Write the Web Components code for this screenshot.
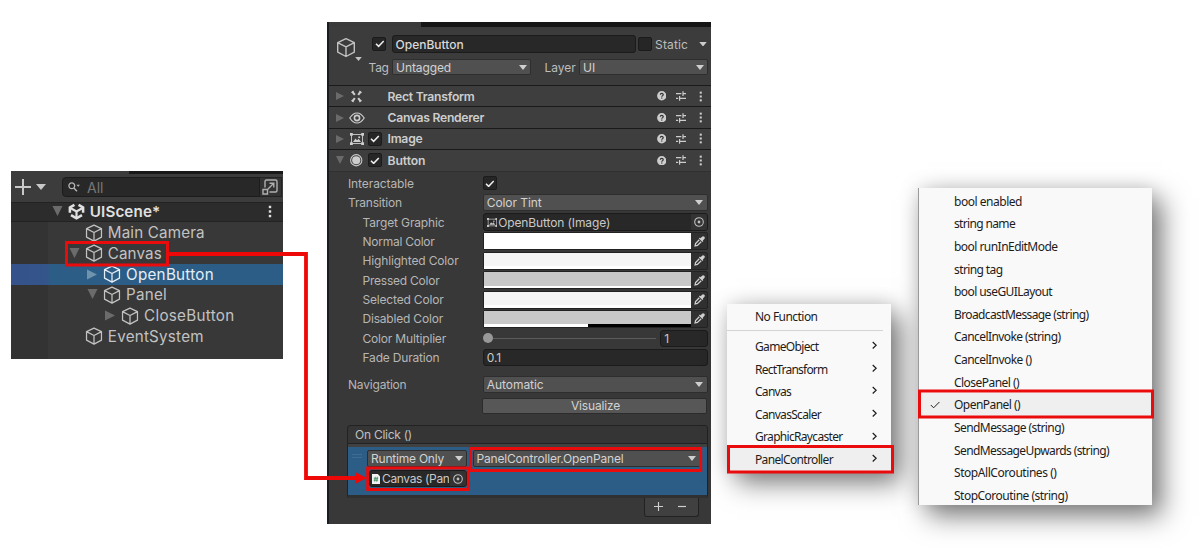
<!DOCTYPE html>
<html lang="en">
<head>
<meta charset="utf-8">
<title>Unity button event setup</title>
<style>
html,body{margin:0;height:549px;overflow:hidden;background:#fff}
</style>
</head>
<body>
<setup-page></setup-page>
<script>
const define=(name,css,html,setup)=>customElements.define(name,class extends HTMLElement{
  constructor(){super();const t=document.createElement('template');
    t.innerHTML='<style>*{box-sizing:border-box}'+css+'</style>'+html;
    this.attachShadow({mode:'open'}).append(t.content.cloneNode(true));}
  connectedCallback(){if(setup)setup(this,this.shadowRoot)}
});

/* Label whose tracking is tuned to a given advance width */
define('fit-text',':host{display:inline-block;white-space:nowrap;flex:none}span{display:inline-block;white-space:pre}','<span><slot></slot></span>',(h,r)=>{
  const s=r.querySelector('span'),w=+h.getAttribute('w'),n=h.textContent.length;
  if(!w||!n)return;
  s.style.letterSpacing=((w-s.getBoundingClientRect().width)/n).toFixed(3)+'px';
});

const ICONS={
 cube:['0 0 20 20','<g fill="none" stroke="currentColor" stroke-width="1.4" stroke-linejoin="round"><path d="M10 1.2 18.3 5.2V14.6L10 19 1.7 14.6V5.2ZM1.7 5.2 10 9.4 18.3 5.2M10 9.4V19"/></g>'],
 unity:['0 0 18 18','<g fill="none" stroke="currentColor"><path stroke-width="2.7" d="M6.8 1.9 2 4.7V10.4M11.2 1.9 16 4.7V10.4M3.2 12.9 9 16.3 14.8 12.9"/><path stroke-width="2.3" d="M3 5.6 9 9 15 5.6M9 9V15.5"/></g>'],
 down:['0 0 10 6','<path fill="currentColor" d="M0 0H10L5 6Z"/>'],
 open:['0 0 10 10','<path fill="currentColor" d="M0 0H10L5 10Z"/>'],
 shut:['0 0 10 10','<path fill="currentColor" d="M0 0 10 5 0 10Z"/>'],
 plus:['0 0 16 16','<path stroke="currentColor" stroke-width="2" d="M8 0V16M0 8H16"/>'],
 minus:['0 0 16 16','<path stroke="currentColor" stroke-width="2.4" d="M0 8H16"/>'],
 search:['0 0 12 10','<circle cx="3.8" cy="3.8" r="2.9" fill="none" stroke="currentColor" stroke-width="1.3"/><path stroke="currentColor" stroke-width="1.4" d="M5.8 6 9 9.3"/><path fill="currentColor" d="M8.4 2.8H12L10.2 4.8Z"/>'],
 popout:['0 0 16 16','<g fill="none" stroke="currentColor" stroke-width="1.4"><path d="M3 8.5V2.5Q3 1 4.5 1H13.5Q15 1 15 2.5V11.5Q15 13 13.5 13H7.5"/><path d="M1 10.5H5.5V15H1ZM6 10 11.5 4.5M7.5 4.2H11.8V8.5"/></g>'],
 dots:['0 0 4 14','<g fill="currentColor"><rect x=".7" y=".8" width="2.6" height="2.6"/><rect x=".7" y="5.7" width="2.6" height="2.6"/><rect x=".7" y="10.6" width="2.6" height="2.6"/></g>'],
 check:['0 0 10 8','<path fill="none" stroke="currentColor" stroke-width="1.7" d="M1 4 3.8 6.8 9.3 1"/>'],
 tick:['0 0 10 8','<path fill="none" stroke="currentColor" stroke-width="1" d="M.8 4 3.6 6.8 9.4 1"/>'],
 chev:['0 0 5 8','<path fill="none" stroke="currentColor" stroke-width="1.2" d="M.7 .7 4.2 4 .7 7.3"/>'],
 rect:['0 0 14 14','<g fill="none" stroke="currentColor" stroke-width="2.3"><path d="M2.4 1.8 5.2 5.2M11.6 1.8 8.8 5.2M2.4 12.2 5.2 8.8M11.6 12.2 8.8 8.8"/></g><path fill="currentColor" d="M.8 2.6 3.6.6 4.4 3ZM13.2 2.6 10.4.6 9.6 3ZM.8 11.4 3.6 13.4 4.4 11ZM13.2 11.4 10.4 13.4 9.6 11Z"/>'],
 eye:['0 0 16 12','<g fill="none" stroke="currentColor" stroke-width="1.2"><path d="M.8 6Q4 1 8 1T15.2 6Q12 11 8 11T.8 6Z"/><circle cx="8" cy="6" r="2.6" stroke-width="1.6"/></g>'],
 image:['0 0 14 12','<rect x="1.5" y="1.5" width="11" height="9" fill="none" stroke="currentColor" stroke-width=".9"/><g fill="currentColor"><path d="M0 0H2.8V2.8H0ZM11.2 0H14V2.8H11.2ZM0 9.2H2.8V12H0ZM11.2 9.2H14V12H11.2ZM3 9 5.5 5.5 7 7.3 8.7 5.7 11 9Z"/><circle cx="9.2" cy="4.2" r="1"/></g>'],
 radio:['0 0 12 12','<circle cx="6" cy="6" r="5.4" fill="none" stroke="currentColor"/><circle cx="6" cy="6" r="3.9" fill="currentColor"/>'],
 help:['0 0 10 10','<circle cx="5" cy="5" r="4.9" fill="currentColor"/><path d="M3.4 3.9Q3.5 2.5 5 2.5T6.6 3.8Q6.6 4.5 5.8 4.9T5 6" fill="none" stroke="#333" stroke-width="1.2"/><rect x="4.4" y="6.8" width="1.2" height="1.2" fill="#333"/>'],
 preset:['0 0 10 10','<path fill="none" stroke="currentColor" stroke-width="1.2" d="M0 2.6H5.4M7 2.6H10M7 .2V5M0 7.4H2.2M3.6 7.4H10M3.6 5V9.8"/>'],
 target:['0 0 10 10','<circle cx="5" cy="5" r="4.3" fill="none" stroke="currentColor" stroke-width="1.1"/><circle cx="5" cy="5" r="1.4" fill="currentColor"/>'],
 dropper:['0 0 11 11','<path fill="currentColor" d="M10.3.7Q9-.4 7.8.9L6.6 2.2 5.9 1.6 4.9 2.6 8.4 6.1 9.4 5.1 8.8 4.4 10.1 3.2Q11.4 2 10.3.7Z"/><path fill="none" stroke="currentColor" stroke-width="1.3" d="M5.3 3.8 1.6 7.6 1.1 9.9 3.4 9.4 7.2 5.7"/>'],
 script:['0 0 9 11','<path fill="#f2f2f2" d="M0 0H6.5L9 2.5V11H0Z"/><path stroke="#3c8c5c" stroke-width="1" d="M3.7 3 3 8.5M6 3 5.3 8.5M2 4.7H7M1.8 6.8H6.8"/>']
};
define('ui-icon',':host{display:block;flex:none}svg{display:block;width:100%;height:100%}','<svg></svg>',(h,r)=>{
  const [vb,p]=ICONS[h.getAttribute('name')],s=r.querySelector('svg');
  s.setAttribute('viewBox',vb);s.innerHTML=p;
  const [w,ht]=h.getAttribute('size').split(' ');h.style.width=w+'px';h.style.height=ht+'px';
});

/* ---------- Hierarchy ---------- */
define('tree-row',`:host{display:flex;height:20.75px;align-items:center;color:#c2c2c2;font-size:15.2px;padding-left:var(--pad)}
:host([selected]){background:linear-gradient(90deg,#36528c 0,#33558a 36px,#2c5d87 40px);color:#e6eef5}
:host([scene]){background:#2c2c2c;border-bottom:1px solid #222;border-top:1px solid #222;color:#e0e0e0;font-weight:600}
.a{width:11px;height:11px;color:#6b6b6b;margin-right:5px}:host([selected]) .a{color:#6f93ad}
.c{margin-right:5px}.m{margin-left:auto;margin-right:11px;display:none}:host([scene]) .m{display:block}`,
'<div class="a"></div><div class="c"></div><slot></slot><div class="m"><ui-icon name="dots" size="4 13"></ui-icon></div>',(h,r)=>{
  h.style.setProperty('--pad',(+h.getAttribute('pad')+1.8)+'px');
  const a=h.getAttribute('arrow');if(a)r.querySelector('.a').innerHTML=`<ui-icon name="${a}" size="${a=='open'?'11 10':'10 11'}"></ui-icon>`;
  r.querySelector('.c').innerHTML=h.hasAttribute('scene')?'<ui-icon name="unity" size="17 17"></ui-icon>':'<ui-icon name="cube" size="18 18"></ui-icon>';
});
define('unity-hierarchy',`:host{display:block;width:272px;height:187.5px;font-family:Inter,sans-serif;background:linear-gradient(90deg,#333 37px,#383838 37px)}
.top{height:3px;background:linear-gradient(90deg,#3c3c3c 118px,#191919 118px)}
.bar{height:27.5px;background:#3c3c3c;display:flex;align-items:center;padding:0 1px 1px 4px;color:#c8c8c8}
.f{margin-left:16px;width:216px;height:20px;border:1px solid #1c1c1c;border-radius:4px 0 0 4px;background:#282828;display:flex;align-items:center;padding-left:5px;font-size:14px;color:#777}
.s{color:#b5b5b5;margin-right:7px}.p{width:24px;height:20px;background:#333;border:1px solid #222;border-left:0;display:flex;align-items:center;justify-content:center;color:#b0b0b0;margin-left:0}`,
`<div class="top"></div><div class="bar"><ui-icon name="plus" size="16 16"></ui-icon><ui-icon name="down" size="10 6" style="margin-left:5px"></ui-icon><div class="f"><ui-icon class="s" name="search" size="12 10"></ui-icon><fit-text w="16.5">All</fit-text></div><div class="p"><ui-icon name="popout" size="16 16"></ui-icon></div></div>
<tree-row scene pad="39" arrow="open"><fit-text w="70.5">UIScene*</fit-text></tree-row>
<tree-row pad="56"><fit-text w="97">Main Camera</fit-text></tree-row>
<tree-row pad="56" arrow="open"><fit-text w="54">Canvas</fit-text></tree-row>
<tree-row pad="74.2" arrow="shut" selected><fit-text w="88">OpenButton</fit-text></tree-row>
<tree-row pad="74.2" arrow="open"><fit-text w="41">Panel</fit-text></tree-row>
<tree-row pad="92.2" arrow="shut"><fit-text w="90.5">CloseButton</fit-text></tree-row>
<tree-row pad="56"><fit-text w="96">EventSystem</fit-text></tree-row>`);

/* ---------- Inspector ---------- */
define('drop-down',`:host{display:flex;height:16.5px;align-items:center;background:#505050;border:1px solid #2e2e2e;border-radius:2px;padding:0 3.5px 0 3px;justify-content:space-between;color:#d2d2d2}`,
'<slot></slot><ui-icon name="down" size="8 5" style="color:#cfcfcf"></ui-icon>');
define('check-box',`:host{display:flex;width:14px;height:14px;background:#262626;border:1px solid #1b1b1b;border-radius:2px;align-items:center;justify-content:center;color:#ededed;flex:none}`,
'<slot></slot>',h=>{if(h.hasAttribute('on'))h.innerHTML='<ui-icon name="check" size="9.5 7.5"></ui-icon>'});
define('text-field',`:host{display:flex;height:17.5px;align-items:center;background:#282828;border:1px solid #1b1b1b;border-radius:3px;padding-left:3px;color:#c8c8c8;overflow:hidden}`,'<slot></slot>');
define('component-header',`:host{display:flex;height:21.4px;align-items:center;background:#3e3e3e;border-top:1px solid #1a1a1a;padding:0 9px 0 7px;color:#cdcdcd;font-weight:600;font-size:12.2px}
.a{width:8px;color:#6a6a6a;margin-right:4.5px}.i{width:16px;display:flex;justify-content:center;margin-right:3.5px}.k{width:18px;margin-right:1.5px}.g{flex:1}.r{display:flex;align-items:center;gap:10px}`,
'<div class="a"></div><div class="i"></div><div class="k"></div><slot></slot><div class="g"></div><div class="r"><ui-icon name="help" size="9.5 9.5"></ui-icon><ui-icon name="preset" size="10 10"></ui-icon><ui-icon name="dots" size="3.5 11" style="margin-left:2.5px"></ui-icon></div>',(h,r)=>{
  r.querySelector('.a').innerHTML=`<ui-icon name="${h.getAttribute('arrow')}" size="8 8"></ui-icon>`;
  r.querySelector('.i').innerHTML=`<ui-icon name="${h.getAttribute('icon')}" size="${h.getAttribute('isize')}"></ui-icon>`;
  if(h.hasAttribute('toggle'))r.querySelector('.k').innerHTML='<check-box on></check-box>';
});
define('prop-row',`:host{display:grid;grid-template-columns:134.7px 225px;height:19.38px;align-items:center;padding-left:19px}
.l{color:#b6b6b6}:host([sub]) .l{padding-left:14.5px}`,'<div class="l"><slot name="label"></slot></div><slot></slot>');
define('color-field',`:host{display:flex;height:18px;border:1px solid #222;border-radius:2px;background:#303030;color:#d0d0d0}
.c{width:207px;background:var(--c);display:flex;align-items:flex-end}.b{height:2.6px;width:100%;background:var(--b,#fff)}.d{flex:1;display:flex;align-items:center;justify-content:center;padding-left:2px}`,
'<div class="c"><div class="b"></div></div><div class="d"><ui-icon name="dropper" size="11 11"></ui-icon></div>');
const color=(label,w,c,b)=>`<prop-row sub><fit-text slot="label" w="${w}">${label}</fit-text><color-field style="--c:${c}${b?';--b:'+b:''}"></color-field></prop-row>`;
define('unity-inspector',`:host{display:block;width:384px;height:502px;background:#383838;border-left:2px solid #191d24;font-family:Inter,sans-serif;font-size:12px;color:#bdbdbd}
.top{height:5px;background:linear-gradient(90deg,#3a3a3a 92px,#161616 92px)}
.head{height:58px;background:#3c3c3c;display:grid;grid-template-columns:39px 1fr;padding-top:8.5px}
.cube{padding:6px 0 0 7px;display:flex;height:34px;color:#c2c2c2;margin-top:-5px}
.l1,.l2{display:flex;align-items:center;height:17px}.l2{margin-top:6px}
.body{padding-top:2.1px;background:#383838;border-top:1px solid #303030}
.ev{margin:11px 3px 0 18px}.t{height:19.5px;border:1px solid #222;border-radius:3px 3px 0 0;background:#353535;padding:0 7px .5px;display:flex;align-items:center;color:#c0c0c0}
.st{height:3px;background:#414141;border:solid #222;border-width:0 1px}
.sel{height:50.5px;background:#2c5d87;border:1px solid #222;border-top:0;border-bottom:3px solid #303030;display:grid;grid-template-columns:19px 100px 228px;padding-top:3px}.fn{margin-left:5.5px;width:228px}
.h{padding:4px 0 0 4px}.h div{width:10px;height:4px;border:solid #3f6c91;border-width:1px 0}
.foot{margin:0 9.5px 0 auto;width:55px;height:19px;background:#404040;border:1px solid #222;border-top:0;border-radius:0 0 3px 3px;display:flex;align-items:center;justify-content:center;gap:15px;color:#cfcfcf;padding-right:2px}
.vis{margin:3.6px 4px 0 153px;height:16px;background:#575757;border:1px solid #2c2c2c;border-radius:2px;display:flex;align-items:center;justify-content:center;color:#d2d2d2;padding-left:2px}
.sl{display:flex;align-items:center}.k{width:10px;height:10px;border-radius:50%;background:#989898}.tr{width:163px;height:1.5px;background:#5c5c5c}
.o{display:flex;align-items:center;justify-content:center;background:#333;width:16px;height:100%;margin-left:auto;color:#c0c0c0;flex:none}`,
`<div class="top"></div><div class="head"><div class="cube"><ui-icon name="cube" size="20 21"></ui-icon><ui-icon name="down" size="7 4" style="margin-top:20px;margin-left:-1px"></ui-icon></div><div>
<div class="l1"><check-box on style="margin-left:4.3px"></check-box><text-field style="width:244px;margin-left:5.3px;color:#d8d8d8"><fit-text w="68" style="font-weight:500">OpenButton</fit-text></text-field><check-box style="margin-left:2.5px"></check-box><fit-text w="33" style="margin-left:3px">Static</fit-text><ui-icon name="down" size="8 4.5" style="margin-left:11px;color:#ccc"></ui-icon></div>
<div class="l2"><fit-text w="20" style="margin-left:.6px">Tag</fit-text><drop-down style="width:139px;margin-left:3.5px"><fit-text w="55">Untagged</fit-text></drop-down><fit-text w="31" style="margin-left:13.5px">Layer</fit-text><drop-down style="width:129px;margin-left:3.5px"><fit-text w="12">UI</fit-text></drop-down></div></div></div>
<component-header arrow="shut" icon="rect" isize="13 13"><fit-text w="87">Rect Transform</fit-text></component-header>
<component-header arrow="shut" icon="eye" isize="16 12"><fit-text w="96.5">Canvas Renderer</fit-text></component-header>
<component-header arrow="shut" icon="image" isize="14 12" toggle><fit-text w="35">Image</fit-text></component-header>
<component-header arrow="open" icon="radio" isize="12.5 12.5" toggle><fit-text w="38">Button</fit-text></component-header>
<div class="body">
<prop-row><fit-text slot="label" w="66">Interactable</fit-text><check-box on></check-box></prop-row>
<prop-row><fit-text slot="label" w="54">Transition</fit-text><drop-down><fit-text w="55">Color Tint</fit-text></drop-down></prop-row>
<prop-row sub><fit-text slot="label" w="82">Target Graphic</fit-text><text-field><ui-icon name="image" size="10.5 9" style="color:#c4c4c4;margin-right:1px"></ui-icon><fit-text w="112">OpenButton (Image)</fit-text><div class="o"><ui-icon name="target" size="10 10"></ui-icon></div></text-field></prop-row>
${color('Normal Color',72,'#fff')}${color('Highlighted Color',96,'#f5f5f5')}${color('Pressed Color',77,'#c8c8c8')}${color('Selected Color',81,'#f5f5f5')}${color('Disabled Color',80.5,'#c8c8c8','linear-gradient(90deg,#fff 50.2%,#000 50.2%)')}
<prop-row sub><fit-text slot="label" w="83.5">Color Multiplier</fit-text><div class="sl"><div class="k"></div><div class="tr"></div><text-field style="width:47.5px;margin-left:4.5px"><fit-text w="6">1</fit-text></text-field></div></prop-row>
<prop-row sub><fit-text slot="label" w="77">Fade Duration</fit-text><text-field><fit-text w="14.5">0.1</fit-text></text-field></prop-row>
<prop-row style="margin-top:7.5px"><fit-text slot="label" w="58.5">Navigation</fit-text><drop-down><fit-text w="57">Automatic</fit-text></drop-down></prop-row>
<div class="vis"><fit-text w="49">Visualize</fit-text></div>
<div class="ev"><div class="t"><fit-text w="57">On Click ()</fit-text></div><div class="st"></div>
<div class="sel"><div class="h"><div></div></div><div><drop-down><fit-text w="73">Runtime Only</fit-text></drop-down><text-field style="margin:3.5px 0 0 2px;padding-left:2px;height:17px"><ui-icon name="script" size="8 10"></ui-icon><div style="width:67px;overflow:hidden;margin-left:2px"><fit-text w="67.5">Canvas (Pan</fit-text></div><div class="o"><ui-icon name="target" size="10 10"></ui-icon></div></text-field></div><drop-down class="fn"><fit-text w="147">PanelController.OpenPanel</fit-text></drop-down></div>
<div class="foot"><ui-icon name="plus" size="9 9"></ui-icon><ui-icon name="minus" size="8 9"></ui-icon></div></div>
</div>`);

/* ---------- Context menus ---------- */
define('menu-item',`:host{display:flex;height:22.62px;align-items:center;padding-left:var(--indent,28px);color:#1c1c1c}
:host([hot]){background:#efefef}.t{width:19px;margin-left:-24px;margin-right:5px;flex:none}.g{flex:1}.c{margin-right:14px}`,
'<div class="t"></div><slot></slot><div class="g"></div><div class="c"></div>',(h,r)=>{
  if(h.hasAttribute('sub'))r.querySelector('.c').innerHTML='<ui-icon name="chev" size="5 8.5" style="margin-bottom:2px"></ui-icon>';
  if(h.hasAttribute('checked'))r.querySelector('.t').innerHTML='<ui-icon name="tick" size="10 8"></ui-icon>';
});
define('context-menu',`:host{display:block;background:#f9f9f9;font-family:"Noto Sans","Open Sans",sans-serif;font-size:12px;box-shadow:10px 11px 25px rgba(0,0,0,.5),0 0 18px rgba(0,0,0,.13)}`,'<slot></slot>');
const items=(list,attr)=>list.map(([t,w,a])=>`<menu-item ${attr} ${a||''}><fit-text w="${w}">${t}</fit-text></menu-item>`).join('');

define('flow-marks',':host{position:absolute;inset:0;pointer-events:none}svg{display:block}',
`<svg width="1200" height="549"><g fill="none" stroke="#ea0b0d" stroke-width="3"><rect x="66.5" y="242.5" width="101" height="22.5"/><rect x="470.7" y="448.5" width="230" height="22"/><rect x="367.7" y="468" width="100.6" height="21.5"/><rect x="728.5" y="446.5" width="164" height="25.5"/><rect x="919.5" y="391" width="233" height="26"/></g><path d="M168 254H306V478H358" fill="none" stroke="#ef0808" stroke-width="3.8"/><path d="M355.5 472.3 367 478 355.5 483.7Z" fill="#ef0808"/></svg>`);

define('setup-page',`:host{display:flex;position:relative;width:1200px;height:549px;background:#fff;align-items:flex-start;padding-left:11px}
unity-hierarchy{margin-top:171px;flex:none}unity-inspector{margin:22px 0 0 44px;flex:none}
.m1{margin:303.5px 0 0 16px;width:163.5px;height:168.5px;flex:none;padding-top:1.5px}.m2{margin:188px 0 0 27.5px;width:234px;height:317px;flex:none;padding-top:2px;--indent:35px;border-left:1px solid #9a9a9a}
.sep{height:1px;background:#d4d4d4;margin:2.5px 8px 4px 0}`,
`<unity-hierarchy></unity-hierarchy><unity-inspector></unity-inspector>
<context-menu class="m1">${items([['No Function',62.5]],'')}<div class="sep"></div>${items([['GameObject',63.5],['RectTransform',72.5],['Canvas',36],['CanvasScaler',66],['GraphicRaycaster',87.5],['PanelController',78,'hot']],'sub')}</context-menu>
<context-menu class="m2">${items([['bool enabled',68],['string name',61],['bool runInEditMode',103.5],['string tag',48.5],['bool useGUILayout',98],['BroadcastMessage (string)',134.5],['CancelInvoke (string)',106.5],['CancelInvoke ()',77.5],['ClosePanel ()',65],['OpenPanel ()',66,'hot checked'],['SendMessage (string)',110],['SendMessageUpwards (string)',155],['StopAllCoroutines ()',102.5],['StopCoroutine (string)',113.5]],'')}</context-menu>
<flow-marks></flow-marks>`);
</script>
</body>
</html>
